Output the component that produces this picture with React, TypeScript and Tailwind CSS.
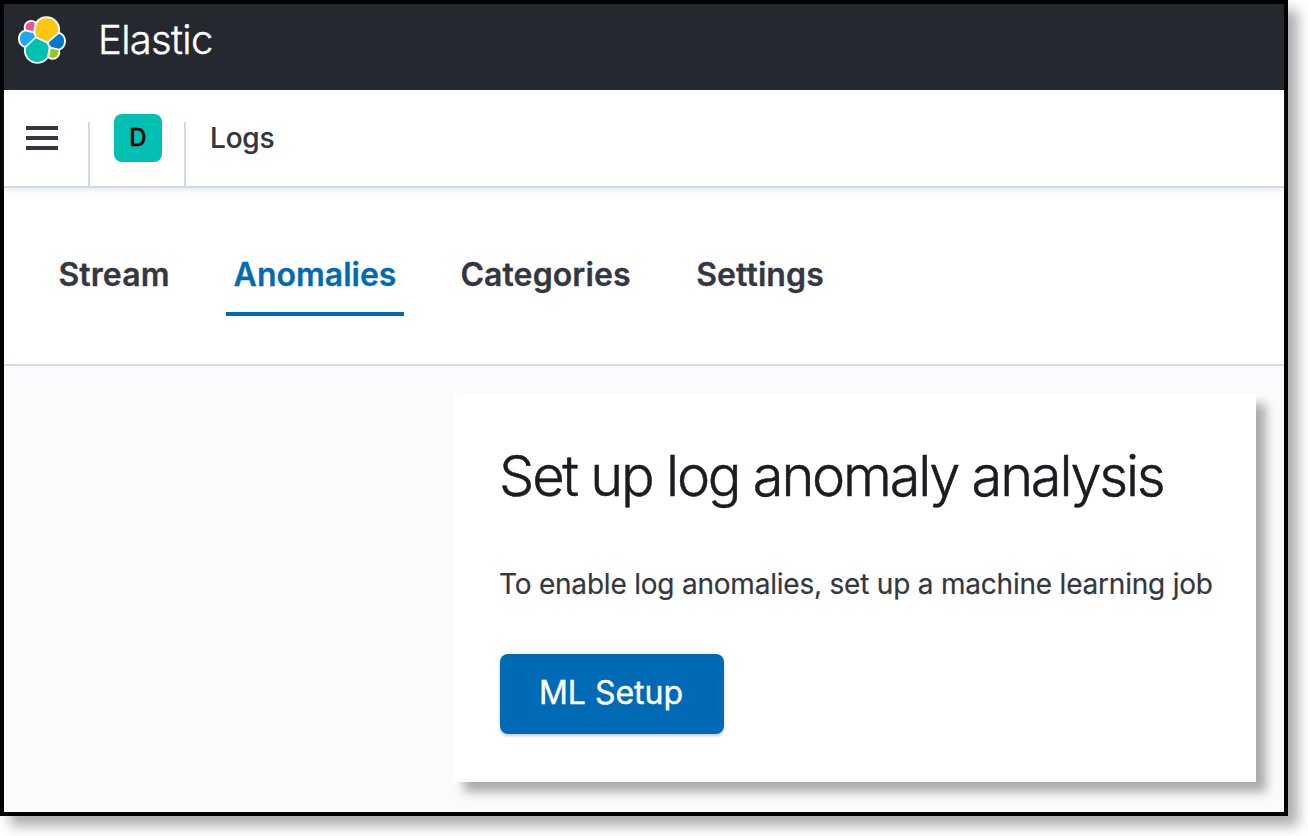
const pieces = [
  { fill: "#FEC514", d: "M12.58 13.787l7.002 3.211 7.066-6.213a7.849 7.849 0 00.152-1.557c0-4.287-3.464-7.763-7.738-7.763a7.726 7.726 0 00-6.39 3.38l-1.176 6.12 1.084 2.822z" },
  { fill: "#00BFB3", d: "M5.333 21.228A7.964 7.964 0 005.178 22.804c0 4.299 3.473 7.785 7.758 7.785a7.744 7.744 0 006.413-3.405l1.166-6.102-1.556-2.988-7.03-3.217-6.596 6.35z" },
  { fill: "#F04E98", d: "M5.288 9.067l4.8 1.137L11.14 4.71a3.785 3.785 0 00-6.056 3.038c0 .449.071.888.204 1.319z" },
  { fill: "#1BA9F5", d: "M4.872 10.214a5.294 5.294 0 00-3.595 5.023 5.297 5.297 0 003.403 4.946l6.733-6.109-1.236-2.652-5.305-1.208z" },
  { fill: "#93C90E", d: "M20.873 27.185a3.745 3.745 0 002.285.778 3.783 3.783 0 003.783-3.783c0-.46-.082-.9-.232-1.309l-4.797-1.126-1.039 5.44z" },
  { fill: "#0077CC", d: "M21.848 20.563l5.28 1.238a5.34 5.34 0 003.595-5.035 5.3 5.3 0 00-3.411-4.934l-6.905 6.063 1.441 2.668z" },
];

function ElasticLogo() {
  return (
    <svg className="size-12 shrink-0 overflow-visible" viewBox="0 0 32 32">
      <g fill="#fff" stroke="#fff" strokeWidth="2.5" strokeLinejoin="round">
        {pieces.map((p) => (
          <path key={p.fill} d={p.d} />
        ))}
      </g>
      {pieces.map((p) => (
        <path key={p.fill} fill={p.fill} d={p.d} />
      ))}
    </svg>
  );
}

const tabs = [
  { label: "Stream", width: "w-[128px]" },
  { label: "Anomalies", width: "w-[178px]", active: true },
  { label: "Categories", width: "w-[187px]" },
  { label: "Settings", width: "w-[146px]" },
];

export default function App() {
  return (
    <div className="h-[836px] w-[1308px] overflow-hidden bg-white font-['Inter',sans-serif] text-[#343741]">
      <div className="flex h-[816px] w-[1288px] flex-col border-4 border-black bg-[#fafbfd] shadow-[10px_10px_12px_rgba(0,0,0,0.32)]">
        <header className="flex h-[86px] shrink-0 items-start bg-[#25282f] pt-3 pl-[14px]">
          <ElasticLogo />
          <span className="ml-8 text-[40px] leading-[48px] font-light tracking-[-0.017em] text-white [-webkit-text-stroke:0.4px]">Elastic</span>
        </header>

        <nav className="z-10 flex h-[98px] shrink-0 items-start border-b-2 border-[#d3dae6] bg-white shadow-[0_2px_4px_rgba(152,162,179,0.25)]">
          <button className="mt-9 ml-[22px] flex w-8 flex-col gap-[6px]" aria-label="Menu">
            <span className="h-1 w-full bg-[#343741]" />
            <span className="h-1 w-full bg-[#343741]" />
            <span className="h-1 w-full bg-[#343741]" />
          </button>
          <div className="mt-8 ml-[30px] h-16 w-0.5 bg-[#d3dae6]" />
          <div className="mt-6 ml-6 flex size-12 items-center justify-center rounded-lg bg-[#00bfb3] text-2xl font-medium text-black [-webkit-text-stroke:0.3px]">D</div>
          <div className="mt-8 ml-[22px] h-16 w-0.5 bg-[#d3dae6]" />
          <span className="mt-6 ml-6 text-[28px] leading-[48px] font-medium tracking-[-0.2px] [-webkit-text-stroke:0.2px]">Logs</span>
        </nav>

        <div className="flex h-[178px] shrink-0 items-start gap-12 border-b-2 border-[#d3dae6] bg-white pt-[46px] pl-[46px]">
          {tabs.map((t) => (
            <div
              key={t.label}
              className={`${t.width} flex h-[82px] justify-center border-b-4 text-[32px] leading-[82px] font-semibold [-webkit-text-stroke:0.3px] ${
                t.active ? "border-[#006bb4] text-[#006bb4]" : "border-transparent tracking-[0.1px]"
              }`}
            >
              {t.label}
            </div>
          ))}
        </div>

        <main className="flex flex-1 items-start pt-7 pl-[450px]">
          <section className="h-[388px] w-[802px] bg-white pl-[45px] pt-[46px] shadow-[10px_10px_10px_rgba(0,0,0,0.32)]">
            <h1 className="text-[56px] leading-[72px] font-light tracking-[-0.04em] whitespace-nowrap text-[#1a1c21] [-webkit-text-stroke:0.5px]">
              Set up log anomaly analysis
            </h1>
            <p className="mt-[51px] text-[28px] leading-[42px] tracking-[-0.21px] whitespace-nowrap [-webkit-text-stroke:0.2px]">
              To enable log anomalies, set up a machine learning job
            </p>
            <button className="mt-[49px] ml-px flex h-20 w-[224px] items-center justify-center rounded-lg bg-[#006bb4] pr-0.5 pb-0.5 text-[32px] text-white shadow-[0_2px_3px_rgba(54,97,126,0.3)] [-webkit-text-stroke:0.4px]">
              ML Setup
            </button>
          </section>
        </main>
      </div>
    </div>
  );
}
